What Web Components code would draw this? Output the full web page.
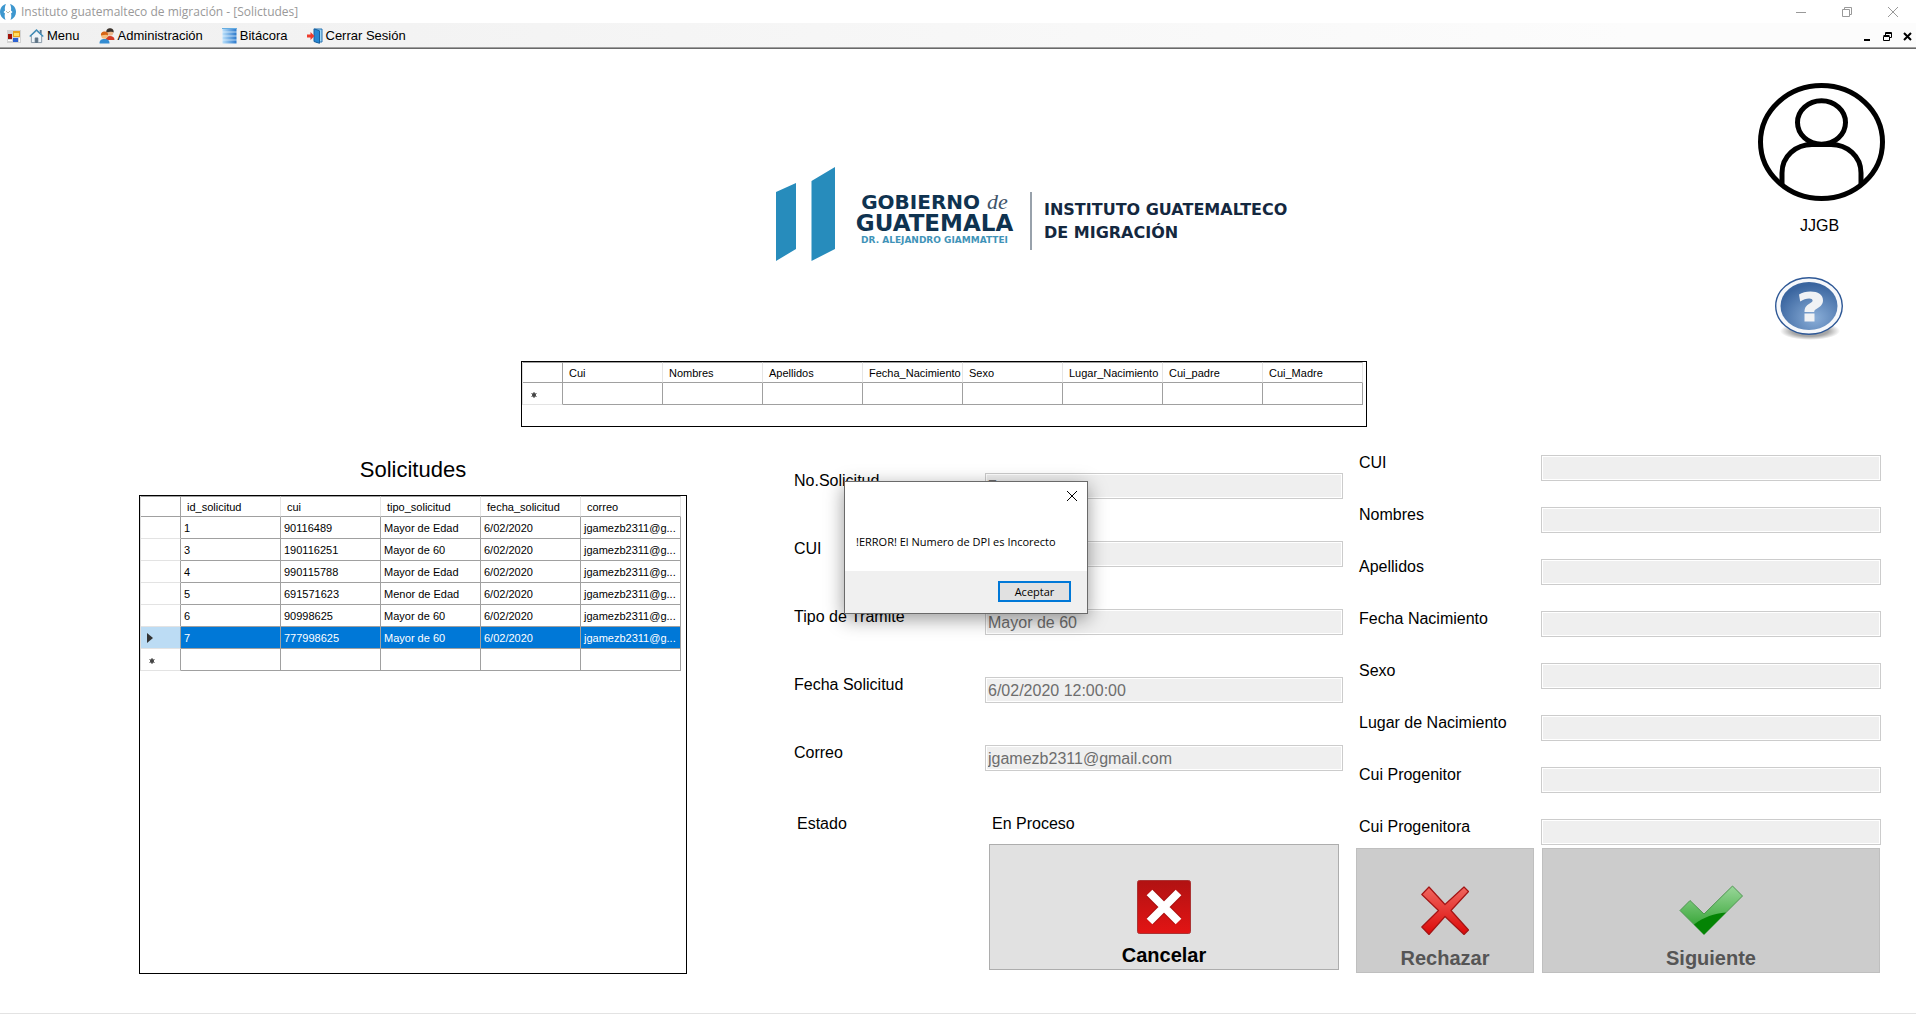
<!DOCTYPE html>
<html lang="es">
<head>
<meta charset="utf-8">
<title>Instituto guatemalteco de migración - [Solictudes]</title>
<style>
  html, body { margin: 0; background: #fff; }
  body { font-family: "Liberation Sans", Arial, sans-serif; font-size: 16px; color: #000; }
</style>
</head>
<body>
<migracion-app></migracion-app>

<script>
const define = (name, html, setup) => {
  const tpl = document.createElement('template');
  tpl.innerHTML = html;
  customElements.define(name, class extends HTMLElement {
    constructor() {
      super();
      this.attachShadow({ mode: 'open' });
    }
    connectedCallback() {
      if (this.shadowRoot.childNodes.length) return;
      this.shadowRoot.append(tpl.content.cloneNode(true));
      if (setup) setup(this, this.shadowRoot);
    }
  });
};

/* Window caption */
define('title-bar', `
<style>
  :host { display: flex; align-items: center; height: 23px; background: #fff; color: #999; font: 12px/16px "Open Sans", "Noto Sans", sans-serif; }
  .name { flex: 1; margin-left: 5px; }
  button { all: unset; width: 46px; height: 21px; display: flex; align-items: center; justify-content: center; }
  svg { display: block; }
</style>
<svg width="16" height="16" viewBox="0 0 16 16" aria-hidden="true">
  <path d="M6 0C2 1 0 4.500 0 8s2 6.500 5.500 8C4.500 13 4.500 11 5 9.500L3.500 8 5 6.500C4.600 4 5 2 6 0z" fill="#3d97cf"/>
  <path d="M10 0c4 1 6 4.500 6 8s-2 6.500-5.500 8c1-3 1-5 .5-6.500L12.500 8 11 6.500C11.400 4 11 2 10 0z" fill="#3d97cf"/>
  <path d="M6 7l2 2 2-2" fill="none" stroke="#b9b9a8"/>
</svg>
<span class="name">Instituto guatemalteco de migración - [Solictudes]</span>
<button aria-label="Minimizar"><svg width="10" height="10"><path d="M0 5.500h10" stroke="#999"/></svg></button>
<button aria-label="Restaurar"><svg width="10" height="10" fill="none" stroke="#999"><path d="M.5 2.500h7v7h-7zM2.500 2.500v-2h7v7h-2"/></svg></button>
<button aria-label="Cerrar"><svg width="10" height="10"><path d="M0 0l10 10M10 0L0 10" stroke="#999"/></svg></button>
`);

/* Menu strip */
define('menu-item', `
<style>
  :host { display: block; }
  button { all: unset; display: flex; align-items: center; gap: 3px; font-size: 13px; line-height: 16px; }
</style>
<button><slot name="icon"></slot><slot></slot></button>
`);

define('menu-strip', `
<style>
  :host { display: flex; align-items: center; gap: 19px; height: 22px; padding: 2px 4px 0 7px;
    background: linear-gradient(90deg, #f0f0f0, #fcfcfc 85%); border-bottom: 1px solid #a0a0a0; box-shadow: 0 1px #696969; margin-bottom: 1px; }
  svg { display: block; }
  .first { display: flex; align-items: center; gap: 8px; }
  .child { margin-left: auto; display: flex; gap: 11px; }
  .child button { all: unset; width: 9px; height: 9px; }
</style>
<div class="first">
  <svg width="14" height="13" viewBox="0 0 14 13" aria-hidden="true">
    <rect width="14" height="13" fill="#d4d4d4"/><rect x="1" y="4" width="4" height="5" fill="#a11208"/>
    <rect x="6" y="1" width="7" height="6" fill="#e9a21c"/><rect x="7" y="3" width="5" height="3" fill="#ffdf60"/>
    <rect x="6" y="8" width="5" height="4" fill="#2c62d2"/><path d="M1 10h4v1H1zM12 8h1v4h-1z" fill="#fff"/>
  </svg>
  <menu-item><svg slot="icon" width="15" height="16" viewBox="0 0 16 16">
    <path d="M2.500 7.500V15h4v-5h3v5h4V7.500L8 2.500z" fill="#eef4f8" stroke="#8696a5"/>
    <path d="M11.500 1.500h2V6l-2-2z" fill="#58758e"/><path d="M.8 8.500L8 1.500l7.200 7" fill="none" stroke="#3f8db8" stroke-width="1.500"/>
    <path d="M6.500 10h3v5.500h-3z" fill="#5e7486"/></svg>Menu</menu-item>
</div>
<menu-item><svg slot="icon" width="16" height="16" viewBox="0 0 16 16">
  <path d="M6.500 12c0-3 2-4 4.500-4s4.500 1 4.500 4z" fill="#d43b25"/><circle cx="11" cy="4.500" r="3.300" fill="#edb98c"/>
  <path d="M7.300 4.500C7 1.500 9 .3 11 .3S15 1.500 14.700 4.500C13.500 3 10 4 7.300 4.500z" fill="#3b332d"/>
  <path d="M.5 15.500c0-3.500 2-4.500 5-4.500s5 1 5 4.500z" fill="#338cd2"/><circle cx="5.500" cy="7.500" r="3.300" fill="#f5be7e"/>
  <path d="M2 7.500C1.700 4.500 3.500 3.500 5.500 3.500S9.300 4.500 9 7.500C7.500 6 5 7 2 7.500z" fill="#d76516"/></svg>Administración</menu-item>
<menu-item><svg slot="icon" width="15" height="16" viewBox="0 0 15 16">
  <defs><linearGradient id="db"><stop stop-color="#b9e0fb"/><stop offset="1" stop-color="#2b79cc"/></linearGradient></defs>
  <path d="M.5.500h14v15H.5z" fill="url(#db)"/><path d="M0 4h15M0 8h15M0 12h15" stroke="#e9f5fd" stroke-width=".7"/><path d="M0 .5h15" stroke="#65ade1"/></svg>Bitácora</menu-item>
<menu-item><svg slot="icon" width="16" height="16" viewBox="0 0 16 16">
  <path d="M8 1h7v13H9z" fill="#9fd6f5" stroke="#2872b0"/><path d="M7 .8l5.500 2v12.500L7 13.500z" fill="#2687d3" stroke="#185f9e"/>
  <path d="M0 6.500h3.500V4l4 4-4 4V9.500H0z" fill="#ee3b2c"/></svg>Cerrar Sesión</menu-item>
<div class="child">
  <button aria-label="Minimizar ventana"><svg width="9" height="9"><path d="M1 7h6v2H1z"/></svg></button>
  <button aria-label="Restaurar ventana"><svg width="9" height="9" fill="none" stroke="#000"><path d="M.5 4.500h6v4h-6zM.5 3.500h6M2.500 3V.500h6v5H7M2.500 1.500h6"/></svg></button>
  <button aria-label="Cerrar ventana"><svg width="9" height="9"><path d="M1 1l7 7M8 1L1 8" stroke="#000" stroke-width="2"/></svg></button>
</div>
`);

/* Government logo */
define('gobierno-logo', `
<style>
  :host { display: flex; align-items: center; height: 94px; color: #0f3350; font-family: "DejaVu Sans", sans-serif; font-weight: 700; white-space: nowrap; }
  svg { display: block; }
  .gob { display: flex; flex-direction: column; align-items: center; width: 165px; margin: 10px 0 0 17px; }
  .l1 { font-size: 20px; line-height: 21px; }
  i { font: italic 400 22px/16px "Liberation Serif", serif; color: #40546a; margin-left: 7px; }
  .l2 { font-size: 23px; line-height: 21px; }
  .l3 { font-size: 9px; line-height: 12px; color: #3f93b8; }
  .inst { border-left: 2px solid #98a1ab; height: 58px; margin: 14px 0 0 13px; padding-left: 12px; box-sizing: border-box;
    display: flex; flex-direction: column; justify-content: center; font-size: 16px; line-height: 23px; color: #14283f; }
</style>
<svg width="59" height="94" viewBox="0 0 59 94" fill="#278cbc" aria-hidden="true"><path d="M0 25l20-9v66L0 94zM35.500 14L59 0v82L35.500 94z"/></svg>
<div class="gob"><div class="l1">GOBIERNO<i>de</i></div><div class="l2">GUATEMALA</div><div class="l3">DR. ALEJANDRO GIAMMATTEI</div></div>
<div class="inst"><span>INSTITUTO GUATEMALTECO</span><span>DE MIGRACIÓN</span></div>
`);

/* User picture, name and help button */
define('user-panel', `
<style>
  :host { display: flex; flex-direction: column; width: 127px; }
  svg { display: block; }
  .name { text-align: center; line-height: 18px; margin: 16px 0 42px; padding-right: 4px; }
  button { all: unset; margin-left: 17px; align-self: flex-start; }
</style>
<svg width="127" height="118" viewBox="0 0 127 118" fill="none" stroke="#000" stroke-width="5" aria-hidden="true">
  <ellipse cx="63.500" cy="59" rx="61" ry="56.500"/><ellipse cx="63.500" cy="39.500" rx="24" ry="21.700"/>
  <path d="M24 102V90C24 73 38 61.500 54 61.500H73C89 61.500 103 73 103 90V102"/>
</svg>
<div class="name"><slot></slot></div>
<button aria-label="Ayuda"><svg width="68" height="64" viewBox="0 0 68 64">
  <defs><radialGradient id="b" cx=".6" cy=".75" r=".7"><stop stop-color="#8aaed8"/><stop offset="1" stop-color="#3a659f"/></radialGradient>
  <radialGradient id="s"><stop offset=".6" stop-color="#000" stop-opacity=".35"/><stop offset="1" stop-color="#000" stop-opacity="0"/></radialGradient></defs>
  <ellipse cx="35" cy="54" rx="30" ry="9" fill="url(#s)"/>
  <ellipse cx="34" cy="29" rx="33.300" ry="28.300" fill="#f6f8fb" stroke="#2e5896" stroke-width="1.400"/>
  <ellipse cx="34" cy="29" rx="28.500" ry="24" fill="url(#b)"/>
  <path d="M24 17.500C27 15.500 31 14.500 35.500 14.500c7.500 0 12.500 3.300 12.500 8.700 0 4-2.300 6-5.500 8-2.500 1.600-3.300 2-3.300 3.800H29.500c0-4.200 1.500-6 4.800-8.200 2.500-1.500 3.300-2 3.300-3.300 0-1.300-1.300-2-3.400-2-3 0-5.900 1-9 2.900zM29.500 36.500H39.500V44.500H29.500z" fill="#f0f2f5"/>
</svg></button>
`);

/* Data grid: columns and rows come as attributes */
define('data-grid', `
<style>
  :host { display: block; box-sizing: border-box; border: 1px solid #000; background: #fff; overflow: hidden; }
  table { border-collapse: separate; border-spacing: 0; table-layout: fixed; font-size: 11px; line-height: 14px; border-left: 1px solid #dcdcdc; box-sizing: border-box; }
  col.h { width: 40px; } col.c { width: 100px; }
  th, td { box-sizing: border-box; padding: 0 0 0 3px; text-align: left; font-weight: 400; white-space: nowrap; overflow: hidden;
    border-right: 1px solid #a0a0a0; border-bottom: 1px solid #a0a0a0; height: 22px; }
  thead th { height: 21px; border-top: 1px solid #a0a0a0; padding-left: 6px; border-right-color: #e5e5e5; }
  thead th:first-child { border-right-color: #a0a0a0; }
  tbody th { border-bottom-color: #e3e3e3; padding-left: 6px; }
  .sel td { background: #0078d7; color: #fff; }
  .sel th { background: #bcdcf4; }
  svg { display: block; }
</style>
<table><colgroup></colgroup><thead><tr></tr></thead><tbody></tbody></table>
`, (host, root) => {
  const cols = host.getAttribute('columns').split(',');
  const rows = (host.getAttribute('rows') || '').split(';').filter(Boolean).map(r => r.split(','));
  const selected = Number(host.getAttribute('selected') || -1);
  root.querySelector('table').style.width = (41 + cols.length * 100) + 'px';
  root.querySelector('colgroup').innerHTML = '<col class="h">' + cols.map(() => '<col class="c">').join('');
  root.querySelector('thead tr').innerHTML = '<th></th>' + cols.map(c => `<th scope="col">${c}</th>`).join('');
  const arrow = '<svg width="7" height="10"><path d="M0 0l6 5-6 5z" fill="#333"/></svg>';
  const star = '<svg width="9" height="9"><path d="M5 3v6M2.500 4.500l5 3M7.500 4.500l-5 3" stroke="#444"/><circle cx="5" cy="6" r="2" fill="#444"/></svg>';
  root.querySelector('tbody').innerHTML = rows.map((r, i) =>
    `<tr${i === selected ? ' class="sel"' : ''}><th scope="row">${i === selected ? arrow : ''}</th>${r.map(c => `<td>${c}</td>`).join('')}</tr>`
  ).join('') + `<tr><th scope="row">${star}</th>${cols.map(() => '<td></td>').join('')}</tr>`;
});

/* Label with a disabled text box */
define('text-field', `
<style>
  :host { display: grid; grid-template-columns: var(--label-width, 191px) 1fr; align-items: start; }
  label { line-height: 16px; white-space: nowrap; }
  input { box-sizing: border-box; width: 100%; min-width: 0; height: 26px; margin: 0; padding: 2px 2px 0; border: 1px solid #ccc; border-radius: 0;
    box-shadow: inset 0 0 0 1px #fff; background: #efefef; color: #6d6d6d; font: inherit; }
</style>
<label for="f"></label><input id="f" type="text" disabled>
`, (host, root) => {
  root.querySelector('label').textContent = host.getAttribute('label');
  root.querySelector('input').value = host.getAttribute('value') || '';
});

/* Large button with a picture over its text */
define('picture-button', `
<style>
  :host { display: block; }
  button { box-sizing: border-box; width: 100%; height: 100%; margin: 0; padding: 0 0 2px; display: flex; flex-direction: column; align-items: center; justify-content: flex-end;
    gap: var(--gap, 11px); border: 1px solid #adadad; border-radius: 0; background: #e1e1e1; color: #000; font: 700 20px/24px "Liberation Sans", Arial, sans-serif; }
  button:disabled { background: #ccc; border-color: #bfbfbf; color: #555; }
</style>
<button><slot name="icon"></slot><span><slot></slot></span></button>
`, (host, root) => { root.querySelector('button').disabled = host.hasAttribute('disabled'); });

/* Message box */
define('message-box', `
<style>
  :host { display: block; position: absolute; left: 844px; top: 481px; width: 244px; }
  section { box-sizing: border-box; height: 133px; border: 1px solid #6a6a6a; background: #fff; box-shadow: 0 5px 18px rgba(0,0,0,.4);
    display: flex; flex-direction: column; font: 11px/16px "Open Sans", "Noto Sans", sans-serif; }
  button { font: inherit; margin: 0; border-radius: 0; color: #000; }
  .close { all: unset; align-self: flex-end; padding: 9px 10px; }
  svg { display: block; }
  p { margin: 0; flex: 1; padding: 24px 0 0 11px; white-space: nowrap; }
  footer { height: 42px; box-sizing: border-box; background: #f0f0f0; display: flex; justify-content: flex-end; padding: 10px 16px 0 0; }
  footer button { box-sizing: border-box; width: 73px; height: 21px; padding: 0; border: 2px solid #0078d7; background: #e1e1e1; }
</style>
<section role="alertdialog" aria-labelledby="m">
  <button class="close" aria-label="Cerrar"><svg width="10" height="10"><path d="M0 0l10 10M10 0L0 10" stroke="#000"/></svg></button>
  <p id="m"><slot></slot></p>
  <footer><button>Aceptar</button></footer>
</section>
`);

/* Page */
define('migracion-app', `
<style>
  :host { display: flex; flex-direction: column; min-height: 100vh; box-sizing: border-box; padding-bottom: 1px; position: relative; background: #fff; }
  main { flex: 1; border-bottom: 1px solid #e3e3e3; }
  .top { display: grid; grid-template-columns: 1fr 846px 1fr; padding: 0 31px 28px 3px; }
  .center { grid-column: 2; display: flex; flex-direction: column; padding-top: 118px; }
  gobierno-logo { margin-bottom: 100px; padding-left: 255px; }
  .center data-grid { height: 66px; }
  user-panel { justify-self: end; margin-top: 34px; }
  .work { display: grid; grid-template-columns: 548fr 107px 549fr 13px 525fr; padding: 0 35px 0 139px; }
  h2 { margin: 0; padding: 1px 0 11px; font-size: 22px; line-height: 28px; font-weight: 400; text-align: center; }
  .list data-grid { height: 479px; }
  .list { grid-column: 1; }
  .request { grid-column: 3; padding-top: 18px; }
  .person { grid-column: 5; }
  .fields { display: flex; flex-direction: column; }
  .request .fields { gap: 42px; }
  .person .fields { gap: 26px; padding-left: 3px; --label-width: 182px; }
  .state { display: grid; grid-template-columns: 195px 1fr; padding-left: 3px; margin: 45px 0 12px; line-height: 16px; }
  .request picture-button { margin: 0 4px 0 195px; height: 126px; --gap: 9px; }
  .actions { display: flex; gap: 8px; margin: 3px 1px 0 0; height: 125px; }
  .actions picture-button:first-child { width: 178px; }
  .actions picture-button:last-child { flex: 1; }
  svg { display: block; }
</style>
<title-bar></title-bar>
<menu-strip></menu-strip>
<main>
  <div class="top">
    <div class="center">
      <gobierno-logo></gobierno-logo>
      <data-grid columns="Cui,Nombres,Apellidos,Fecha_Nacimiento,Sexo,Lugar_Nacimiento,Cui_padre,Cui_Madre"></data-grid>
    </div>
    <user-panel>JJGB</user-panel>
  </div>
  <div class="work">
    <section class="list">
      <h2>Solicitudes</h2>
      <data-grid columns="id_solicitud,cui,tipo_solicitud,fecha_solicitud,correo" selected="5"
        rows="1,90116489,Mayor de Edad,6/02/2020,jgamezb2311@g...;3,190116251,Mayor de 60,6/02/2020,jgamezb2311@g...;4,990115788,Mayor de Edad,6/02/2020,jgamezb2311@g...;5,691571623,Menor de Edad,6/02/2020,jgamezb2311@g...;6,90998625,Mayor de 60,6/02/2020,jgamezb2311@g...;7,777998625,Mayor de 60,6/02/2020,jgamezb2311@g..."></data-grid>
    </section>
    <section class="request">
      <div class="fields">
        <text-field label="No.Solicitud" value="7"></text-field>
        <text-field label="CUI"></text-field>
        <text-field label="Tipo de Tramite" value="Mayor de 60"></text-field>
        <text-field label="Fecha Solicitud" value="6/02/2020 12:00:00"></text-field>
        <text-field label="Correo" value="jgamezb2311@gmail.com"></text-field>
      </div>
      <div class="state"><span>Estado</span><span>En Proceso</span></div>
      <picture-button><svg slot="icon" width="54" height="54" viewBox="0 0 54 54">
        <defs><linearGradient id="r" x2="0" y2="1"><stop stop-color="#b11212"/><stop offset="1" stop-color="#e31414"/></linearGradient></defs>
        <rect x=".5" y=".5" width="53" height="53" rx="2" fill="url(#r)" stroke="#a33"/>
        <path d="M13 13L41 41M41 13L13 41" stroke="#8e0c0c" stroke-width="10" opacity=".5"/>
        <path d="M12.500 12.500L41.500 41.500M41.500 12.500L12.500 41.500" stroke="#fff" stroke-width="8"/></svg>Cancelar</picture-button>
    </section>
    <section class="person">
      <div class="fields">
        <text-field label="CUI"></text-field>
        <text-field label="Nombres"></text-field>
        <text-field label="Apellidos"></text-field>
        <text-field label="Fecha Nacimiento"></text-field>
        <text-field label="Sexo"></text-field>
        <text-field label="Lugar de Nacimiento"></text-field>
        <text-field label="Cui Progenitor"></text-field>
        <text-field label="Cui Progenitora"></text-field>
      </div>
      <div class="actions">
        <picture-button disabled><svg slot="icon" width="48" height="49" viewBox="0 0 48 49">
          <defs><linearGradient id="x" x2="0" y2="1"><stop stop-color="#f0675f"/><stop offset="1" stop-color="#dc0808"/></linearGradient></defs>
          <path d="M8 1L24 18.500 43 1 47.500 5.500 30 24.500 47.500 44 43 48.500 24 30.500 8 48.500.8 41 17.500 24.500.8 8.500z" fill="url(#x)" stroke="#a31414" stroke-width="1.200" stroke-linejoin="round"/></svg>Rechazar</picture-button>
        <picture-button disabled><svg slot="icon" width="64" height="50" viewBox="0 0 64 50">
          <defs><linearGradient id="g" x2="0" y2="1"><stop stop-color="#9ad79a"/><stop offset=".8" stop-color="#3ba83b"/></linearGradient></defs>
          <path d="M1 25.500L11 15.500 25 29 53.500 1 63.500 11 25 49.500z" fill="url(#g)" stroke="#4e9650"/>
          <path d="M15 39.500C25 32 35 28.500 47 27.500L25 49.500z" fill="#048404"/></svg>Siguiente</picture-button>
      </div>
    </section>
  </div>
</main>
<message-box>!ERROR! El Numero de DPI es Incorecto</message-box>
`);
</script>
</body>
</html>
